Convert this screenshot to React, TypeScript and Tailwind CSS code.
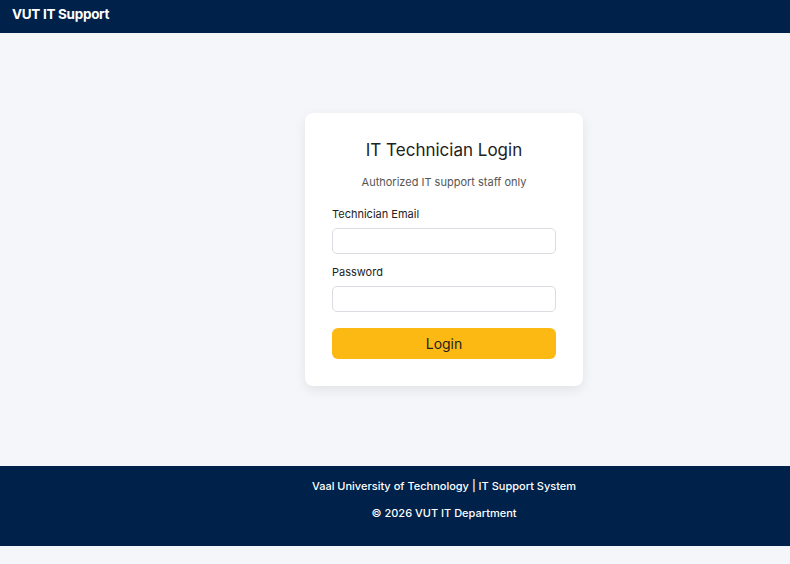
export default function App() {
  return (
    <div className="min-h-[564px] bg-[#f4f6fa] font-['Inter',sans-serif] flex flex-col">
      <header className="h-[33px] bg-[#00214a] flex items-center px-3 pb-[4px]">
        <h1 className="text-white font-bold text-[13.5px] tracking-[-0.3px]">VUT IT Support</h1>
      </header>

      <main className="h-[433px] flex items-center justify-center pl-[98px]">
        <div className="w-[278px] bg-white rounded-[8px] shadow-[0_4px_12px_rgba(0,0,0,0.08)] px-[27px] pt-[26px] pb-[27px]">
          <h2 className="text-center text-[17px] text-[#222] leading-[22px]">IT Technician Login</h2>
          <p className="text-center text-[11px] text-[#555] mt-[14px] leading-[14px]">Authorized IT support staff only</p>

          <form className="mt-[18px] flex flex-col" onSubmit={(e) => e.preventDefault()}>
            <label className="text-[11px] text-[#222] leading-[14px]">Technician Email</label>
            <input type="email" className="mt-[7px] h-[26px] rounded-[5px] border border-[#dcdde3] bg-white px-2 text-[12px] outline-none" />

            <label className="mt-[11px] text-[11px] text-[#222] leading-[14px]">Password</label>
            <input type="password" className="mt-[7px] h-[26px] rounded-[5px] border border-[#dcdde3] bg-white px-2 text-[12px] outline-none" />

            <button type="submit" className="mt-[16px] h-[31px] rounded-[6px] bg-[#fcb914] text-[14px] text-[#222]">
              Login
            </button>
          </form>
        </div>
      </main>

      <footer className="h-[80px] bg-[#00214a] flex flex-col items-center pt-[13px] pl-[98px] text-white text-[11px] font-medium">
        <p className="leading-[14px]">Vaal University of Technology | IT Support System</p>
        <p className="leading-[14px] mt-[13px]">© 2026 VUT IT Department</p>
      </footer>
    </div>
  );
}
